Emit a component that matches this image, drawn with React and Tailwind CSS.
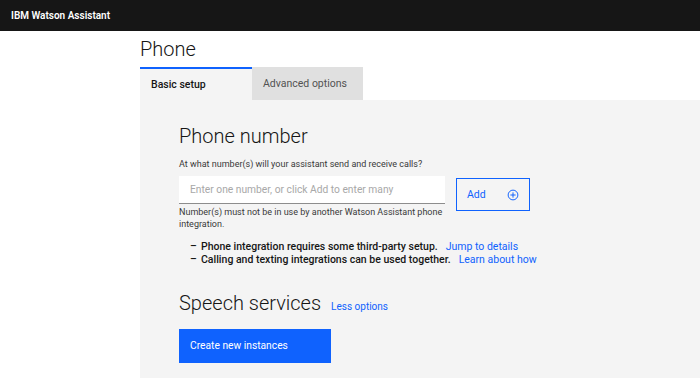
export default function App() {
  return (
    <div className="h-[378px] w-[700px] overflow-hidden bg-white font-['Roboto',sans-serif] text-[#161616]">
      {/* Top bar */}
      <header className="flex h-[31px] items-center bg-[#161616] px-[11px]">
        <span className="text-[10px] font-semibold text-white">IBM Watson Assistant</span>
      </header>

      <div className="ml-[140px]">
        <h1 className="pt-[4px] text-[20px] font-light leading-[28px]">Phone</h1>

        {/* Tabs */}
        <div className="mt-[4px] flex text-[10.5px]">
          <div className="flex h-[33px] w-[112px] items-center border-t-2 border-[#0f62fe] bg-[#f4f4f4] pl-[11px] font-medium">
            Basic setup
          </div>
          <div className="flex h-[33px] w-[111px] items-center bg-[#e0e0e0] pl-[11px] text-[#525252]">
            Advanced options
          </div>
        </div>

        {/* Panel */}
        <div className="h-[278px] bg-[#f4f4f4] pl-[39px] pt-[22px]">
          <h2 className="text-[20px] font-light leading-[28px]">Phone number</h2>
          <p className="mt-[8px] text-[9px] leading-[12px] text-[#393939]">At what number(s) will your assistant send and receive calls?</p>

          <div className="mt-[6px] flex items-start gap-[11px]">
            <div>
              <div className="flex h-[28px] w-[266px] items-center border-b border-[#8d8d8d] bg-white pl-[11px] text-[10.25px] text-[#a8a8a8]">
                Enter one number, or click Add to enter many
              </div>
              <p className="mt-[2px] w-[266px] text-[9px] leading-[12px] text-[#393939]">
                Number(s) must not be in use by another Watson Assistant phone integration.
              </p>
            </div>
            <button className="mt-[2px] flex h-[33px] w-[74px] items-center justify-between border-[1.5px] border-[#0f62fe] px-[10px] text-[10.5px] text-[#0f62fe]">
              Add
              <svg width="12" height="12" viewBox="0 0 16 16" fill="none" stroke="#0f62fe" strokeWidth="1.3">
                <circle cx="8" cy="8" r="6.5" />
                <path d="M8 4.5v7M4.5 8h7" />
              </svg>
            </button>
          </div>

          <ul className="mt-[10px] pl-[11px] text-[10.5px] leading-[13px]">
            <li className="flex">
              <span className="w-[11px] font-medium">–</span>
              <span className="font-medium">Phone integration requires some third-party setup.</span>
              <a className="ml-[8px] text-[#0f62fe]">Jump to details</a>
            </li>
            <li className="flex">
              <span className="w-[11px] font-medium">–</span>
              <span className="font-medium">Calling and texting integrations can be used together.</span>
              <a className="ml-[8px] text-[#0f62fe]">Learn about how</a>
            </li>
          </ul>

          <div className="mt-[23px] flex items-baseline gap-[10px]">
            <h2 className="text-[20px] font-light leading-[28px]">Speech services</h2>
            <a className="text-[10px] text-[#0f62fe]">Less options</a>
          </div>

          <button className="mt-[12px] flex h-[34px] w-[152px] items-center bg-[#0f62fe] pl-[11px] text-[10.25px] text-white">
            Create new instances
          </button>
        </div>
      </div>
    </div>
  );
}
